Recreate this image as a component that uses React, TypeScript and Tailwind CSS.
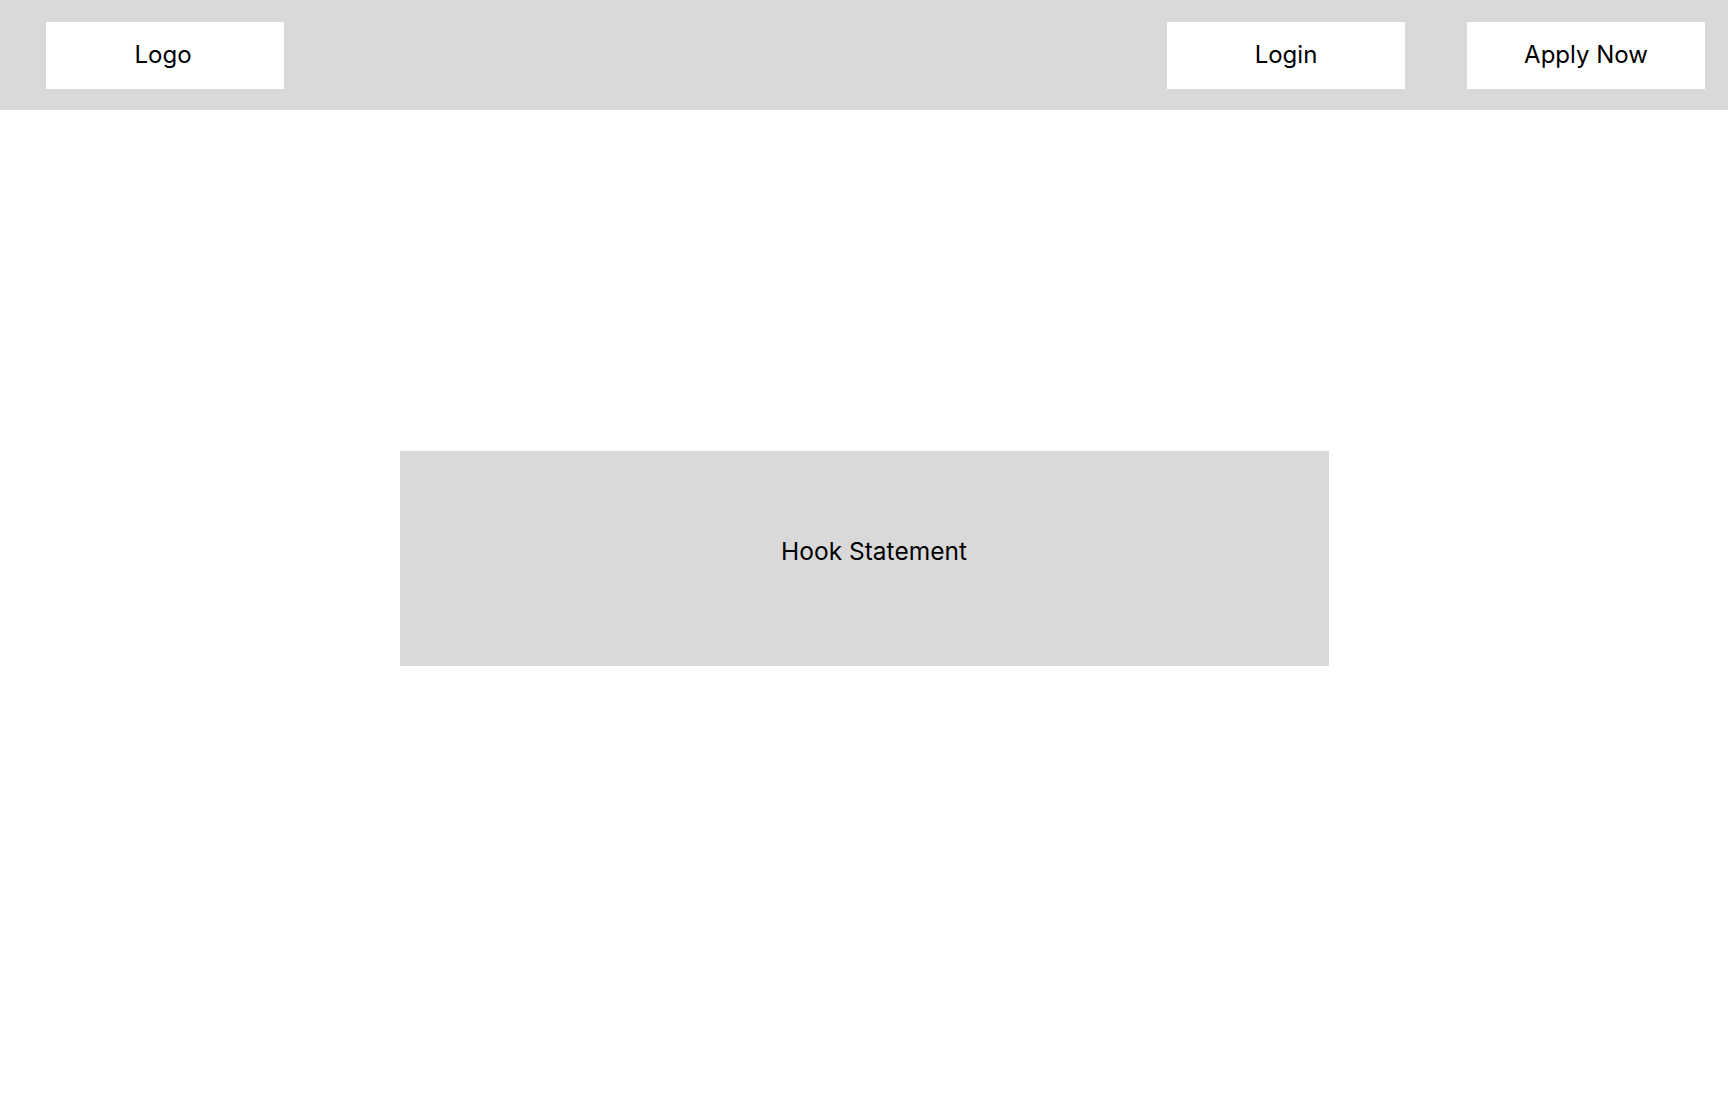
export default function App() {
  return (
    <div className="min-h-screen bg-white font-['Inter',sans-serif] text-black">
      <header className="flex h-[110px] items-center bg-[#d9d9d9] pl-[46px] pr-[23px]">
        <div className="flex h-[67px] w-[238px] items-center justify-center bg-white pr-[4px] text-[24px]">Logo</div>
        <div className="ml-auto flex items-center gap-[62px]">
          <button className="flex h-[67px] w-[238px] items-center justify-center bg-white text-[24px]">Login</button>
          <button className="flex h-[67px] w-[238px] items-center justify-center bg-white text-[24px]">Apply Now</button>
        </div>
      </header>

      <main className="flex justify-center pt-[341px]">
        <div className="flex h-[215px] w-[929px] justify-center bg-[#d9d9d9] pl-[20px] pt-[85px] text-[24.5px] leading-[30px]">
          Hook Statement
        </div>
      </main>
    </div>
  );
}
